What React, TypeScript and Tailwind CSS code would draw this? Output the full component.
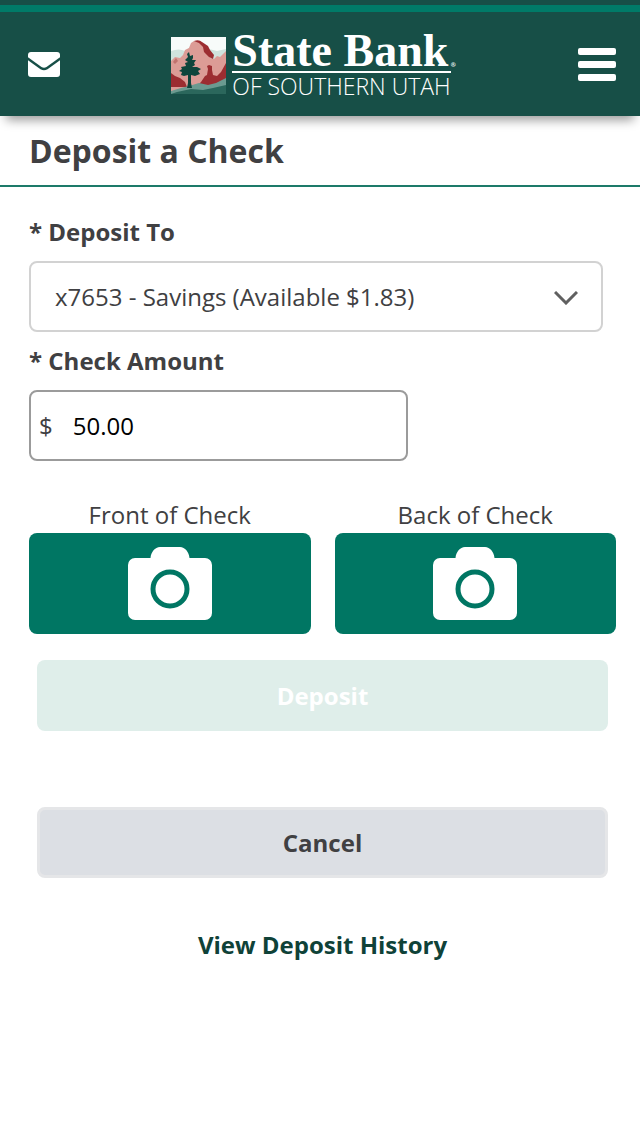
import { useState } from "react";

// red rocks, pine tree and sage foreground
function LogoPicture() {
  return (
    <svg viewBox="0 0 55 57" className="w-[55px] h-[57px]" aria-hidden="true">
      <rect width="55" height="57" fill="#f7fbfa" />
      <path d="M0 14q8-3 14 0l8-6 24 6 9-2v14H0z" fill="#cfe3dd" />
      <path
        d="M0 57V24l4-4 5 1 3-3 2-5 4-2 2-5 3-2 6 0 5 5 4 7 1 5 4 1 3-3 3 1 6-6v43z"
        fill="#dc9c96"
      />
      <path
        d="M23 4q5-2 8 1l6 4 2 4 4 5-1 4-4-2-5-5-1-5-4-4z"
        fill="#9c2d31"
      />
      <path d="M2 25l3-4 2 3-3 3z" fill="#c0726e" />
      <path
        d="M0 36l4 3 5 2 5 4 2 5H0zM27 48l3-3 4-6 2-1 1-6-1-3 2-1 3 1 0 4 1 5 4 1 4-4 5-9v22H27z"
        fill="#9c2d31"
      />
      <path
        d="M0 54l10-3 8-2 10-3 9 2 8-2 10-5v16H0z"
        fill="#6b9a90"
      />
      <path d="M6 55l14-3 12 1 10-2 13-3v9H0z" fill="#2b675c" />
      <path
        d="M18 15l1 4 3-1 0 3-1 2 4 0-2 3 1 2-3 2 5 0 4 2-3 2 2 3-5 2-4-1 0 8 1 5h-5l1-5v-8l-4 1-3-1 1-3-3-1 3-2-1-2 5-1-1-3 3-1-3-2 3-3-1-3z"
        fill="#0f453c"
      />
    </svg>
  );
}

function CameraIcon() {
  return (
    <svg viewBox="0 0 84 74" className="w-[84px] h-[74px]" aria-hidden="true">
      <path
        d="M7 11h15.500C23 5 27 0 32 0h20c5 0 9 5 9.500 11H77a7 7 0 0 1 7 7v48a7 7 0 0 1-7 7H7a7 7 0 0 1-7-7V18a7 7 0 0 1 7-7z"
        fill="#ffffff"
      />
      <circle cx="42" cy="42" r="17" fill="none" stroke="#007663" strokeWidth="5" />
    </svg>
  );
}

function Header() {
  return (
    <header className="relative z-10">
      <div className="h-[5px] bg-[#174f47]"></div>
      <div className="h-[7px] bg-[#007b68]"></div>
      <div className="flex items-center justify-between h-[104px] pl-7 pr-6 bg-[#174f47] shadow-[0_10px_10px_-6px_rgba(0,0,0,0.4)]">
        <button aria-label="Messages" className="cursor-pointer">
          <svg viewBox="0 0 32 25" className="w-8 h-[25px]" aria-hidden="true">
            <path
              d="M3 0h26a3 3 0 0 1 3 3v2.300L18.500 15q-2.500 1.600-5 0L0 5.300V3a3 3 0 0 1 3-3z"
              fill="#ffffff"
            />
            <path
              d="M0 8.300L12.500 17.200q3.500 2.200 7 0L32 8.300V22a3 3 0 0 1-3 3H3a3 3 0 0 1-3-3z"
              fill="#ffffff"
            />
          </svg>
        </button>
        <a href="#home" className="flex items-center gap-1.5 mt-0.5 mr-4 text-white">
          <LogoPicture />
          <span className="relative flex flex-col">
            <span className="border-b-2 border-white font-['Liberation_Serif',serif] text-[46px] font-bold leading-10 whitespace-nowrap">
              State Bank
            </span>
            <span className="absolute top-7 left-full text-[6px] font-bold leading-3">®</span>
            <span className="font-['Open_Sans',sans-serif] text-[23px] font-light leading-[26px] whitespace-nowrap">
              OF SOUTHERN UTAH
            </span>
          </span>
        </a>
        <button aria-label="Menu" className="flex flex-col gap-1.5 cursor-pointer">
          <span className="w-[38px] h-[7px] rounded-xs bg-white"></span>
          <span className="w-[38px] h-[7px] rounded-xs bg-white"></span>
          <span className="w-[38px] h-[7px] rounded-xs bg-white"></span>
        </button>
      </div>
    </header>
  );
}

function CheckPhoto({ label, id }: { label: string; id: string }) {
  return (
    <div className="flex flex-col">
      <label htmlFor={id} className="text-center leading-9">
        {label}
      </label>
      <button
        id={id}
        type="button"
        className="flex justify-center items-center h-[101px] rounded-lg bg-[#007663] cursor-pointer"
      >
        <CameraIcon />
      </button>
    </div>
  );
}

function App() {
  // variables
  const [account, setAccount] = useState("x7653");
  const [amount, setAmount] = useState("50.00");

  return (
    <div className="min-h-screen bg-white font-['Open_Sans',sans-serif] text-2xl text-[#404042]">
      <Header />
      <h1 className="h-[71px] pl-[29px] border-b-2 border-[#1d7a69] text-[32px] font-bold leading-[70px]">
        Deposit a Check
      </h1>
      <form className="pl-[29px] pr-6 pt-[27px]" onSubmit={(e) => e.preventDefault()}>
        <div className="pr-[13px]">
          <label htmlFor="account" className="block font-bold leading-9 mb-[11px]">
            * Deposit To
          </label>
          <div className="relative">
            <select
              id="account"
              value={account}
              onChange={(e) => setAccount(e.target.value)}
              className="w-full h-[71px] pl-6 pr-16 appearance-none rounded-lg border-2 border-[#d2d2d2] bg-white"
            >
              <option value="x7653">x7653 - Savings (Available $1.83)</option>
            </select>
            <svg
              viewBox="0 0 24 14"
              className="absolute right-[25px] top-[30px] w-6 h-[14px] pointer-events-none"
              aria-hidden="true"
            >
              <path d="M1 1l11 11L23 1" fill="none" stroke="#606060" strokeWidth="3" />
            </svg>
          </div>
          <label htmlFor="amount" className="block font-bold leading-9 mt-[11px] mb-[11px]">
            * Check Amount
          </label>
          <div className="flex items-center w-[66%] h-[71px] pl-2 rounded-lg border-2 border-[#9b9b9b]">
            <span>$</span>
            <input
              id="amount"
              type="text"
              inputMode="decimal"
              value={amount}
              onChange={(e) => setAmount(e.target.value)}
              className="flex-1 min-w-0 h-full pl-5 bg-transparent text-black outline-none"
            />
          </div>
        </div>
        <div className="grid grid-cols-2 gap-6 mt-9">
          <CheckPhoto label="Front of Check" id="front" />
          <CheckPhoto label="Back of Check" id="back" />
        </div>
        <div className="flex flex-col px-2 pt-[26px]">
          <button
            type="submit"
            disabled
            className="h-[71px] rounded-lg bg-[#dfeeea] text-white font-bold"
          >
            Deposit
          </button>
          <button
            type="button"
            className="h-[71px] mt-[76px] rounded-lg border-3 border-[#e5e6e8] bg-[#dcdfe4] font-bold cursor-pointer"
          >
            Cancel
          </button>
          <a
            href="#history"
            className="self-center mt-[49px] font-bold leading-9 text-[#0f4238]"
          >
            View Deposit History
          </a>
        </div>
      </form>
    </div>
  );
}

export default App;
